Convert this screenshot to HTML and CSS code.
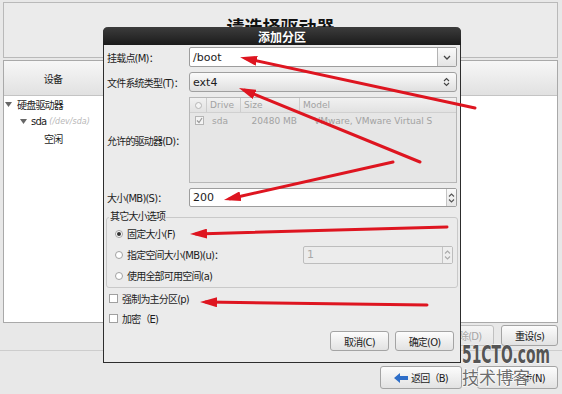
FILE: index.html
```html
<!DOCTYPE html>
<html lang="zh-CN">
<head>
<meta charset="utf-8">
<title>添加分区</title>
<link rel="stylesheet" href="styles.css">
</head>
<body>
<div class="screen">
  <div class="bgwin">
    <div class="top-panel"><div class="big-title">请选择驱动器</div></div>
    <div class="dev-panel">
      <div class="col-head"><div class="col-cell">设备</div><div class="col-rest"></div></div>
      <div class="tree">
        <div class="tree-row lvl0"><svg class="tri" width="7" height="5" viewBox="0 0 7 5"><path d="M0 0H7L3.5 5Z"/></svg>硬盘驱动器</div>
        <div class="tree-row lvl1"><svg class="tri" width="7" height="5" viewBox="0 0 7 5"><path d="M0 0H7L3.5 5Z"/></svg>sda <span class="dev">(/dev/sda)</span></div>
        <div class="tree-row lvl2">空闲</div>
      </div>
    </div>
    <div class="action-row">
      <button class="btn act disabled">删除(D)</button>
      <button class="btn act">重设(s)</button>
    </div>
    <div class="nav-row">
      <button class="btn nav"><svg width="14" height="10" viewBox="0 0 14 10"><path d="M0 5L6 0V3H14V7H6V10Z" fill="#2f6fc9"/></svg>返回（B)</button>
      <button class="btn nav next">下一步(N)</button>
    </div>
  </div>

  <div class="dialog">
    <div class="titlebar">添加分区</div>
    <div class="dlg-body">
      <div class="form">
        <label class="lbl">挂载点(M)：</label>
        <div class="combo-entry">
          <span class="ce-text">/boot</span>
          <span class="ce-btn"><svg width="8" height="5" viewBox="0 0 8 5"><path d="M1 1L4 4L7 1" stroke="#444" stroke-width="1.3" fill="none"/></svg></span>
        </div>

        <label class="lbl">文件系统类型(T)：</label>
        <div class="combo">
          <span class="cb-text">ext4</span>
          <svg width="7" height="10" viewBox="0 0 7 10"><path d="M1 4L3.5 1.5L6 4M1 6L3.5 8.5L6 6" stroke="#444" stroke-width="1.1" fill="none"/></svg>
        </div>

        <label class="lbl">允许的驱动器(D)：</label>
        <div class="drives">
          <div class="dt-head">
            <span class="c0"><span class="mini-radio"></span></span>
            <span class="c1">Drive</span>
            <span class="c2">Size</span>
            <span class="c3">Model</span>
          </div>
          <div class="dt-row">
            <span class="c0"><span class="mini-check"><svg width="7" height="7" viewBox="0 0 7 7"><path d="M1 3.5L3 5.5L6 1" stroke="#9a9a9a" stroke-width="1.2" fill="none"/></svg></span></span>
            <span class="c1 pad">sda</span>
            <span class="c2 size">20480 MB</span>
            <span class="c3 model">VMware, VMware Virtual S</span>
          </div>
        </div>

        <label class="lbl">大小(MB)(S)：</label>
        <div class="spin">
          <span class="sp-text">200</span>
          <span class="sp-btns">
            <svg width="7" height="4" viewBox="0 0 7 4"><path d="M1 3.5L3.5 1L6 3.5" stroke="#555" stroke-width="1.1" fill="none"/></svg>
            <svg width="7" height="4" viewBox="0 0 7 4"><path d="M1 0.5L3.5 3L6 0.5" stroke="#555" stroke-width="1.1" fill="none"/></svg>
          </span>
        </div>
      </div>

      <fieldset class="frame">
        <legend class="legend">其它大小选项</legend>
        <div class="opt"><span class="radio on"></span>固定大小(F)</div>
        <div class="opt"><span class="radio"></span>指定空间大小(MB)(u)：
          <span class="spin small">
            <span class="sp-text dim">1</span>
            <span class="sp-btns dim">
              <svg width="7" height="4" viewBox="0 0 7 4"><path d="M1 3.5L3.5 1L6 3.5" stroke="#aaa" stroke-width="1.1" fill="none"/></svg>
              <svg width="7" height="4" viewBox="0 0 7 4"><path d="M1 0.5L3.5 3L6 0.5" stroke="#aaa" stroke-width="1.1" fill="none"/></svg>
            </span>
          </span>
        </div>
        <div class="opt"><span class="radio"></span>使用全部可用空间(a)</div>
      </fieldset>

      <div class="chk-row"><span class="check"></span>强制为主分区(p)</div>
      <div class="chk-row"><span class="check"></span>加密（E)</div>

      <div class="dlg-buttons">
        <button class="btn dbtn">取消(C)</button>
        <button class="btn dbtn">确定(O)</button>
      </div>
    </div>
  </div>

  <svg class="watermark" width="96" height="46" viewBox="0 0 96 46">
    <text class="wm-logo" x="1" y="21" textLength="88" lengthAdjust="spacingAndGlyphs">51CTO.com</text>
    <text class="wm-text" x="1" y="42" textLength="68" lengthAdjust="spacingAndGlyphs">技术博客</text>
  </svg>

  <svg class="arrows" width="562" height="394" viewBox="0 0 562 394">
    <defs>
      <marker id="ah" markerUnits="userSpaceOnUse" markerWidth="17" markerHeight="10" refX="11" refY="5" orient="auto">
        <path d="M0 0L17 5L0 10Z" fill="#de1520"/>
      </marker>
    </defs>
    <g stroke="#de1520" stroke-width="3" fill="none" stroke-linecap="round">
      <line x1="475" y1="108" x2="246" y2="58.5" marker-end="url(#ah)"/>
      <line x1="420" y1="162" x2="244.5" y2="90.2" marker-end="url(#ah)"/>
      <line x1="393" y1="162" x2="229.8" y2="198.7" marker-end="url(#ah)"/>
      <line x1="447" y1="227" x2="196" y2="233.9" marker-end="url(#ah)"/>
      <line x1="427" y1="305" x2="206" y2="302.1" marker-end="url(#ah)"/>
    </g>
  </svg>
</div>
</body>
</html>
```
FILE: styles.css
```css
* { box-sizing: border-box; }
html, body { margin: 0; padding: 0; }
body {
  width: 562px; height: 394px; overflow: hidden;
  background: #e8e8e8;
  font-family: "DejaVu Sans", "Noto Sans CJK SC", sans-serif;
  font-size: 10px; color: #1c1c1c;
}
.screen { position: relative; width: 562px; height: 394px; overflow: hidden; }

/* background installer window */
.bgwin { display: flex; flex-direction: column; padding: 2px 4px 0 3px; }
.top-panel {
  height: 56px; border: 1px solid #b9b9b9; background: #ebebeb;
  display: flex; justify-content: center; padding-top: 14px;
}
.big-title { font-size: 18px; font-weight: bold; line-height: 22px; color: #111; }

.dev-panel {
  margin-top: 2px; height: 263px; border: 1px solid #a9a9a9; background: #fff;
  display: flex; flex-direction: column;
}
.col-head {
  height: 35px; display: flex; flex: none;
  background: linear-gradient(#f7f7f7, #e1e1e1);
  border-bottom: 1px solid #c4c4c4;
}
.col-cell {
  width: 103px; display: flex; align-items: center; justify-content: center;
  border-right: 1px solid #d2d2d2; letter-spacing: -0.8px; padding-right: 4px;
}
.col-rest { flex: 1; }
.tree { display: flex; flex-direction: column; }
.tree-row { height: 17px; display: flex; align-items: center; letter-spacing: -0.8px; }
.tri { fill: #666; flex: none; }
.lvl0 { padding-left: 1px; }
.lvl0 .tri { margin-right: 5px; }
.lvl1 { padding-left: 16px; }
.lvl1 .tri { margin-right: 4px; }
.lvl2 { padding-left: 40px; }
.dev { color: #b8b8b8; font-size: 8px; font-style: italic; margin-left: 3px; letter-spacing: 0; }

.btn {
  font: inherit; letter-spacing: -0.8px; color: #1c1c1c;
  border: 1px solid #a4a4a4; border-radius: 3px;
  background: linear-gradient(#fcfcfc, #e2e2e2);
  padding: 0; display: flex; align-items: center; justify-content: center;
}
.action-row {
  height: 28px; display: flex; justify-content: flex-end; align-items: flex-start;
  gap: 7px; padding-top: 2px; border-bottom: 1px solid #cdcdcd;
  margin: 0 -4px 0 -3px; padding-right: 4px;
}
.act { width: 57px; height: 21px; }
.act.disabled { color: #a6a6a6; background: linear-gradient(#f4f4f4, #e6e6e6); border-color: #c0c0c0; }
.nav-row { display: flex; justify-content: flex-end; gap: 15px; margin-top: 15px; }
.nav { width: 82px; height: 23px; gap: 3px; }
.next { width: 81px; padding-left: 14px; }

/* dialog */
.dialog {
  position: absolute; left: 103px; top: 27px; width: 358px; height: 336px;
  border: 1px solid #2d2d2d; border-top: none; border-radius: 5px 5px 0 0;
  background: #ebebeb; display: flex; flex-direction: column;
}
.titlebar {
  height: 18px; margin: 0 -1px; flex: none;
  background: linear-gradient(#3c3c3c, #1b1b1b);
  border-radius: 5px 5px 0 0;
  display: flex; align-items: center; justify-content: center;
  color: #fff; font-weight: bold; font-size: 12px;
}
.dlg-body { padding: 2px 3px 0 3px; display: flex; flex-direction: column; }
.form { display: grid; grid-template-columns: 82px 1fr; row-gap: 5px; align-items: center; }
.lbl { letter-spacing: -0.8px; white-space: nowrap; }

.combo-entry {
  height: 20px; display: flex; border: 1px solid #9d9d9d; border-radius: 2px; background: #fff;
}
.ce-text { flex: 1; display: flex; align-items: center; padding-left: 3px; font-size: 11px; }
.ce-btn {
  width: 19px; display: flex; align-items: center; justify-content: center;
  border-left: 1px solid #b3b3b3; background: linear-gradient(#fafafa, #e4e4e4);
}
.combo {
  height: 20px; display: flex; align-items: center; padding: 0 6px 0 3px;
  border: 1px solid #a0a0a0; border-radius: 3px; background: linear-gradient(#fbfbfb, #e0e0e0);
}
.cb-text { flex: 1; font-size: 11px; }

.drives {
  height: 86px; border: 1px solid #b7b7b7; background: #e6e6e6; color: #a2a2a2; font-size: 9px;
}
.dt-head {
  height: 15px; display: flex; align-items: stretch;
  background: linear-gradient(#f1f1f1, #e2e2e2); border-bottom: 1px solid #d0d0d0;
}
.dt-head > span { display: flex; align-items: center; }
.dt-head .c1, .dt-head .c2, .dt-head .c3 { border-left: 1px solid #cdcdcd; padding-left: 3px; }
.c0 { width: 16px; flex: none; display: flex; align-items: center; padding-left: 5px; }
.c1 { width: 34px; flex: none; }
.c2 { width: 59px; flex: none; }
.c3 { flex: 1; white-space: nowrap; overflow: hidden; }
.dt-row { height: 15px; display: flex; align-items: center; }
.pad { padding-left: 6px; }
.size { text-align: right; padding-right: 2px; }
.model { padding-left: 15px; }
.mini-radio { width: 7px; height: 7px; border: 1px solid #b5b5b5; border-radius: 50%; background: #f4f4f4; }
.mini-check {
  width: 9px; height: 9px; border: 1px solid #b5b5b5; background: #f4f4f4;
  display: flex; align-items: center; justify-content: center;
}

.spin {
  height: 19px; display: flex; border: 1px solid #9d9d9d; border-radius: 2px; background: #fff;
}
.sp-text { flex: 1; display: flex; align-items: center; padding-left: 3px; font-size: 11px; }
.sp-btns {
  width: 10px; display: flex; flex-direction: column; align-items: center; justify-content: center; gap: 2px;
  border-left: 1px solid #c4c4c4; background: linear-gradient(#fafafa, #e6e6e6);
}
.spin.small { width: 150px; height: 18px; margin-left: auto; background: #ececec; border-color: #bdbdbd; }
.dim { color: #a9a9a9; }
.sp-btns.dim { background: #eeeeee; }

.frame {
  margin: 4px -1px 0 -1px; padding: 0 4px 1px 8px;
  border: 1px solid #c9c9c9; border-radius: 3px;
}
.legend { padding: 0 1px; margin-left: -6px; line-height: 12px; letter-spacing: -0.8px; }
.opt { height: 21px; display: flex; align-items: center; letter-spacing: -0.8px; }
.radio {
  width: 8px; height: 8px; border: 1px solid #a2a2a2; border-radius: 50%; background: #fff;
  margin-right: 4px; flex: none; display: flex; align-items: center; justify-content: center;
}
.radio.on::after { content: ""; width: 4px; height: 4px; border-radius: 50%; background: #333; }

.chk-row { height: 20px; display: flex; align-items: center; letter-spacing: -0.8px; padding-left: 2px; margin-top: 0; }
.chk-row:first-of-type { margin-top: 4px; }
.check { width: 9px; height: 9px; border: 1px solid #a0a0a0; background: #fff; margin-right: 4px; flex: none; }

.dlg-buttons { display: flex; justify-content: flex-end; gap: 6px; padding-right: 3px; margin-top: 3px; }
.dbtn { width: 59px; height: 20px; }

/* watermark */
.watermark { position: absolute; left: 461px; top: 342px; pointer-events: none; overflow: visible; }
.wm-logo {
  font-family: "DejaVu Sans Condensed", "DejaVu Sans", sans-serif; font-weight: bold;
  font-size: 24px; fill: #555; stroke: #fff; stroke-width: 0.8px; paint-order: stroke;
}
.wm-text {
  font-family: "Noto Sans CJK SC", sans-serif; font-size: 17px;
  fill: #6e6e6e; stroke: #fff; stroke-width: 1.2px; paint-order: stroke;
}

.arrows { position: absolute; left: 0; top: 0; pointer-events: none; }
```
